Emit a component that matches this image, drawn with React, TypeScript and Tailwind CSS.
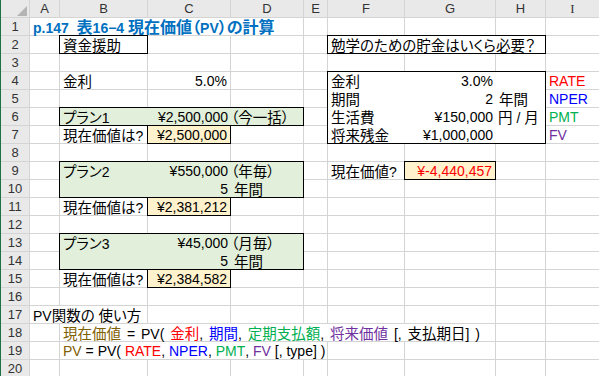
import React from "react";

const CJK = /([\u3000-\u30ff\u3400-\u9fff\uff00-\uffef]+)/;

// splits a string into CJK / latin runs so each gets its own font and size
function T({ s, lat = "text-[14px]", cjk = "text-[14.5px]" }: { s: string; lat?: string; cjk?: string }) {
  return (
    <>
      {s
        .split(CJK)
        .filter(Boolean)
        .map((p, i) =>
          CJK.test(p) ? (
            <span key={i} className={`inline-block [font-family:'Noto_Sans_CJK_JP',sans-serif] [font-feature-settings:'palt'] ${cjk}`}>
              {p}
            </span>
          ) : (
            <span key={i} className={`inline-block [font-family:'Liberation_Sans',sans-serif] ${lat}`}>
              {p}
            </span>
          )
        )}
    </>
  );
}

const L = (s: string, cls = "") => <div className={`px-[3px] leading-[17px] whitespace-pre ${cls}`}><T s={s} /></div>;
const R = (s: string, cls = "") => <div className={`px-[3px] leading-[17px] whitespace-pre text-right ${cls}`}><T s={s} /></div>;

type Cell = { c?: string; n?: React.ReactNode };
const e: Cell = {};
const w = (n: number): Cell[] => Array.from({ length: n }, () => e);

const segs = (parts: [string, string][], cls = "") => (
  <div className={`pl-[3px] leading-[17px] whitespace-pre ${cls}`}>
    {parts.map(([s, c], i) => (
      <span key={i} className={c}>
        <T s={s} />
      </span>
    ))}
  </div>
);

const brown = "text-[#7f6000]";
const red = "text-[#ff0000]";
const blue = "text-[#0000ff]";
const green = "text-[#00b050]";
const purple = "text-[#7030a0]";
const black = "text-black";

const title = (
  <div className="pl-[3px] leading-[17px] whitespace-pre font-bold text-[#0070c0]">
    <T s="p.147  表16−4 現在価値（PV）の計算" lat="text-[14px]" cjk="text-[16px]" />
  </div>
);

const plan = (name: string, amount: string, unit: string, years?: boolean) => (
  <div className={years ? "grid grid-cols-[88px_83px_72px] grid-rows-[18px_17px]" : "grid grid-cols-[88px_83px_72px]"}>
    {L(name)}
    {R(amount)}
    {L(unit, "pl-0")}
    {years && <div />}
    {years && R("5")}
    {years && L("年間")}
  </div>
);

const savings = (
  <div className="grid grid-cols-[77px_91px_49px] grid-rows-[18px_18px_18px_17px]">
    {L("金利")}
    {R("3.0%")}
    <div />
    {L("期間")}
    {R("2")}
    {L("年間")}
    {L("生活費")}
    {R("¥150,000")}
    {L("円 / 月", "pl-[2px]")}
    {L("将来残金")}
    {R("¥1,000,000")}
    <div />
  </div>
);

const rows: Cell[][] = [
  [{ c: "col-span-4 bg-white", n: title }, ...w(5)],
  [
    e,
    { c: "bg-white outline outline-black", n: L("資金援助") },
    e,
    e,
    e,
    { c: "col-span-3 bg-white outline outline-black", n: L("勉学のための貯金はいくら必要？") },
    e,
  ],
  w(9),
  [
    e,
    { n: L("金利") },
    { n: R("5.0%") },
    e,
    e,
    { c: "col-span-3 row-span-4 bg-white outline outline-black", n: savings },
    { n: L("RATE", red) },
  ],
  [e, e, e, e, e, { n: L("NPER", blue) }],
  [e, { c: "col-span-3 bg-[#e2efda] outline outline-black", n: plan("プラン1", "¥2,500,000", "（今一括）") }, e, { n: L("PMT", green) }],
  [e, { n: L("現在価値は?") }, { c: "bg-[#fff2cc] outline outline-black", n: R("¥2,500,000") }, e, e, { n: L("FV", purple) }],
  w(9),
  [
    e,
    { c: "col-span-3 row-span-2 bg-[#e2efda] outline outline-black", n: plan("プラン2", "¥550,000", "（年毎）", true) },
    e,
    { n: L("現在価値?") },
    { c: "bg-[#fff2cc] outline outline-black", n: R("¥-4,440,457", red) },
    e,
    e,
  ],
  w(6),
  [e, { n: L("現在価値は?") }, { c: "bg-[#fff2cc] outline outline-black", n: R("¥2,381,212") }, ...w(6)],
  w(9),
  [e, { c: "col-span-3 row-span-2 bg-[#e2efda] outline outline-black", n: plan("プラン3", "¥45,000", "（月毎）", true) }, ...w(5)],
  w(6),
  [e, { n: L("現在価値は?") }, { c: "bg-[#fff2cc] outline outline-black", n: R("¥2,384,582") }, ...w(6)],
  w(9),
  [{ c: "col-span-2 bg-white", n: L("PV関数の 使い方") }, ...w(7)],
  [
    e,
    {
      c: "col-span-6 bg-white",
      n: segs(
        [
          ["現在価値", brown],
          [" = PV( ", black],
          ["金利", red],
          [", ", black],
          ["期間", blue],
          [", ", black],
          ["定期支払額", green],
          [", ", black],
          ["将来価値", purple],
          [" [, 支払期日] )", black],
        ],
        "[word-spacing:2px]"
      ),
    },
    e,
    e,
  ],
  [
    e,
    {
      c: "col-span-4 bg-white",
      n: segs([
        ["PV", brown],
        [" = PV( ", black],
        ["RATE", red],
        [", ", black],
        ["NPER", blue],
        [", ", black],
        ["PMT", green],
        [", ", black],
        ["FV", purple],
        [" [, type] )", black],
      ]),
    },
    e,
    e,
    e,
    e,
  ],
  w(9),
];

const head = "bg-[#e9e9e9] text-center text-[13px] leading-[17px] text-[#333] [font-family:'Liberation_Sans',sans-serif]";

export default function App() {
  return (
    <div className="w-[599px] h-[376px] overflow-hidden bg-white">
      <div className="grid grid-cols-[28px_29px_87px_82px_72px_23px_76px_90px_49px_1fr] grid-rows-[17px_repeat(20,17px)] gap-px bg-[#d4d4d4] border-l border-[#1e7145]">
        {/* corner */}
        <div className="bg-[#e9e9e9] flex items-end justify-end pr-[2px] pb-[1px]">
          <svg width="10" height="10" viewBox="0 0 10 10">
            <polygon points="10,0 10,10 0,10" fill="#b4b4b4" />
          </svg>
        </div>
        {["A", "B", "C", "D", "E", "F", "G", "H"].map((h) => (
          <div key={h} className={head}>
            {h}
          </div>
        ))}
        <div className={`${head} [font-family:'Liberation_Serif',serif]`}>I</div>

        {rows.map((r, i) => (
          <React.Fragment key={i}>
            <div className={head}>{i + 1}</div>
            {r.map((cell, j) => (
              <div key={j} className={cell.c ?? "bg-white"}>
                {cell.n}
              </div>
            ))}
          </React.Fragment>
        ))}
      </div>
    </div>
  );
}
